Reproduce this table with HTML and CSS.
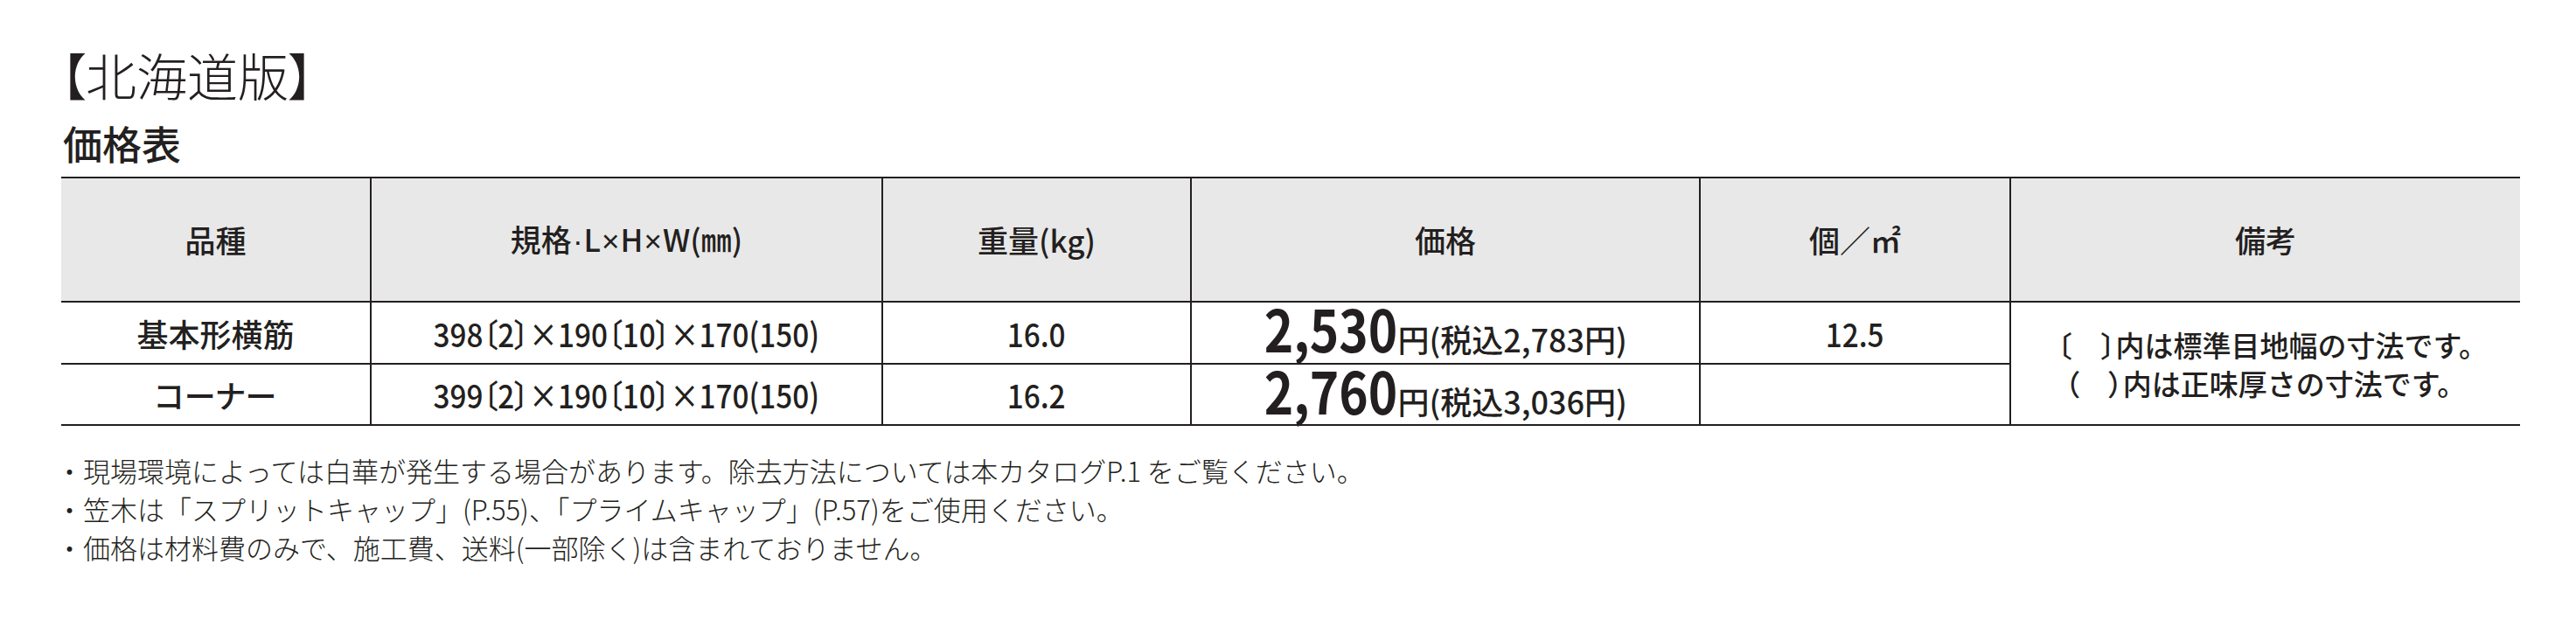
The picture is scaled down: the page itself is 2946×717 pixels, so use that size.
FILE: index.html
```html
<!DOCTYPE html>
<html lang="ja">
<head>
<meta charset="utf-8">
<title>北海道版 価格表</title>
<link rel="stylesheet" href="styles.css">
</head>
<body>
<main class="page">
  <h1 class="title">【北海道版】</h1>
  <h2 class="subtitle">価格表</h2>
  <table class="price-table">
    <colgroup>
      <col class="c-name"><col class="c-size"><col class="c-weight"><col class="c-price"><col class="c-count"><col class="c-note">
    </colgroup>
    <thead>
      <tr>
        <th>品種</th>
        <th>規格<span class="lat">·</span>L<span class="lat">×</span>H<span class="lat">×</span>W(㎜)</th>
        <th>重量(kg)</th>
        <th>価格</th>
        <th>個／㎡</th>
        <th>備考</th>
      </tr>
    </thead>
    <tbody>
      <tr class="row-1">
        <td class="name">基本形横筋</td>
        <td><span class="num">398〔2〕×190〔10〕×170(150)</span></td>
        <td><span class="num">16.0</span></td>
        <td class="price"><span class="price-main">2,530</span><span class="price-sub">円(税込2,783円)</span></td>
        <td><span class="num">12.5</span></td>
        <td class="note" rowspan="2">〔　<span class="tight">〕</span>内は標準目地幅の寸法です。<br><span class="tight">（</span>　<span class="tight">）</span>内は正味厚さの寸法です。</td>
      </tr>
      <tr class="row-2">
        <td class="name">コーナー</td>
        <td><span class="num">399〔2〕×190〔10〕×170(150)</span></td>
        <td><span class="num">16.2</span></td>
        <td class="price"><span class="price-main">2,760</span><span class="price-sub">円(税込3,036円)</span></td>
        <td></td>
      </tr>
    </tbody>
  </table>
  <ul class="notes">
    <li>・現場環境によっては白華が発生する場合があります。除去方法については本カタログP.1 をご覧ください。</li>
    <li>・笠木は「スプリットキャップ」(P.55)、「プライムキャップ」(P.57)をご使用ください。</li>
    <li>・価格は材料費のみで、施工費、送料(一部除く)は含まれておりません。</li>
  </ul>
</main>
</body>
</html>
```

FILE: styles.css
```css
html, body {
  margin: 0;
  padding: 0;
  background: #ffffff;
}

body {
  font-family: "Noto Sans CJK JP", "Noto Sans", sans-serif;
  color: #231f20;
}

.page {
  padding: 56px 0 0 69px;
}

.title {
  margin: 0;
  font-size: 58px;
  font-weight: 300;
  line-height: 58px;
  font-feature-settings: "palt";
}

.subtitle {
  margin: 27px 0 0 3px;
  font-size: 45px;
  font-weight: 500;
  line-height: 45px;
}

.price-table {
  margin: 16px 0 0 1px;
  width: 2812px;
  table-layout: fixed;
  border-collapse: collapse;
  font-feature-settings: "palt";
}

.c-name   { width: 354px; }
.c-size   { width: 585px; }
.c-weight { width: 353px; }
.c-price  { width: 582px; }
.c-count  { width: 355px; }
.c-note   { width: 583px; }

.price-table th,
.price-table td {
  padding: 0;
  text-align: center;
  vertical-align: middle;
  border-top: 2px solid #231f20;
  border-bottom: 2px solid #231f20;
  border-left: 2px solid #231f20;
}

.price-table th:first-child,
.price-table td:first-child {
  border-left: none;
}

.price-table th {
  height: 140px;
  background: #e8e8e8;
  font-size: 35px;
  font-weight: 500;
  line-height: 40px;
}

.lat {
  font-family: "Liberation Sans", sans-serif;
  font-size: 35px;
  padding: 0 1px;
}

.price-table td {
  font-size: 36px;
  font-weight: 500;
  line-height: 40px;
}

.row-1 td { height: 69px; }
.row-2 td { height: 68px; }

.num {
  display: inline-block;
  font-size: 37px;
  transform: scaleX(0.9);
}

.price {
  line-height: 60px;
}

.price-main {
  display: inline-block;
  font-size: 66px;
  font-weight: 700;
  transform: scaleX(0.86);
  transform-origin: right center;
  margin-left: -24px;
}

.price-sub {
  font-size: 36px;
  font-weight: 500;
}

.price-table td.note {
  font-size: 33px;
  line-height: 44px;
  font-feature-settings: normal;
}

.tight {
  font-feature-settings: "palt";
}

.notes {
  list-style: none;
  margin: 29px 0 0 -5px;
  padding: 0;
  font-size: 31px;
  font-weight: 300;
  line-height: 44px;
}
```
